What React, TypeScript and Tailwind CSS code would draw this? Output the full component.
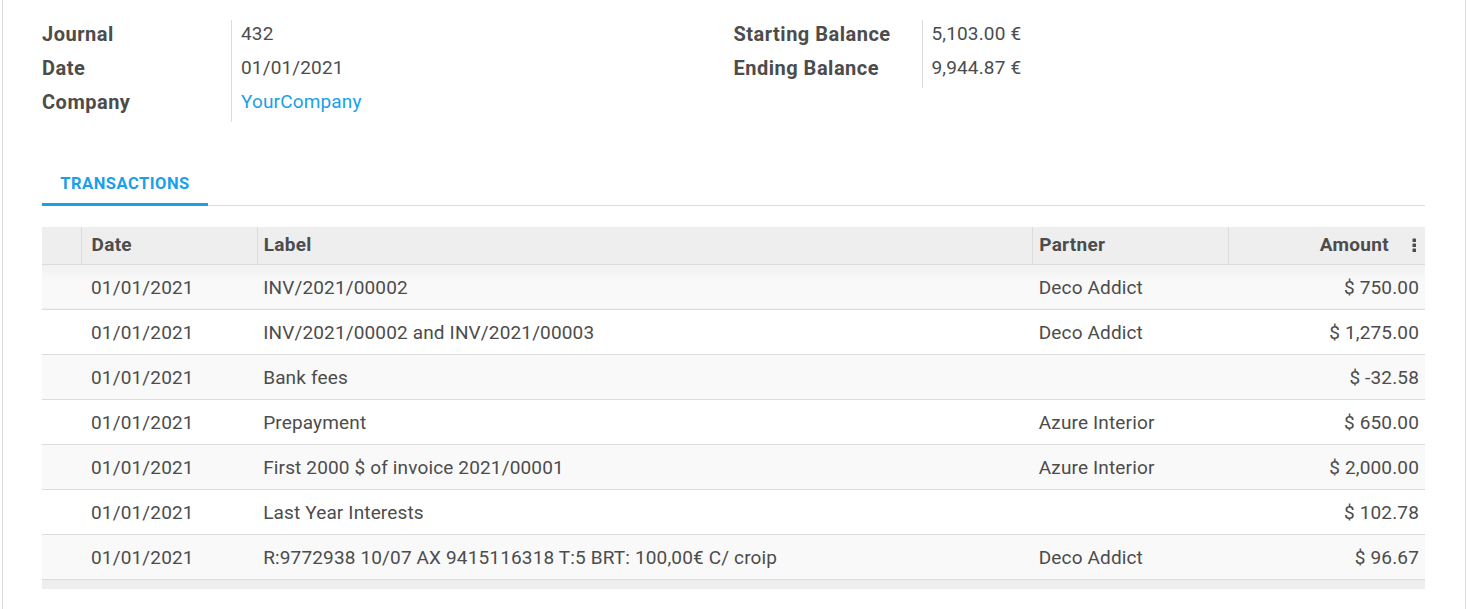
import React from 'react';

const rows = [
  { date: '01/01/2021', label: 'INV/2021/00002', partner: 'Deco Addict', amount: '$ 750.00' },
  { date: '01/01/2021', label: 'INV/2021/00002 and INV/2021/00003', partner: 'Deco Addict', amount: '$ 1,275.00' },
  { date: '01/01/2021', label: 'Bank fees', partner: '', amount: '$ -32.58' },
  { date: '01/01/2021', label: 'Prepayment', partner: 'Azure Interior', amount: '$ 650.00' },
  { date: '01/01/2021', label: 'First 2000 $ of invoice 2021/00001', partner: 'Azure Interior', amount: '$ 2,000.00' },
  { date: '01/01/2021', label: 'Last Year Interests', partner: '', amount: '$ 102.78' },
  { date: '01/01/2021', label: 'R:9772938 10/07 AX 9415116318 T:5 BRT: 100,00€ C/ croip', partner: 'Deco Addict', amount: '$ 96.67' },
];

const Field = ({ label, value, link, w }: { label: string; value: string; link?: boolean; w: string }) => (
  <div className="flex h-[34px] items-center">
    <div className={`${w} shrink-0 text-[20px] font-bold tracking-[0.5px] text-[#4c4c4c]`}>{label}</div>
    <div className={`pl-[10px] ${link ? 'text-[#1a9fe8]' : 'text-[#4c4c4c]'}`}>{value}</div>
  </div>
);

const Kebab = () => (
  <svg width="6" height="16" viewBox="0 0 6 16" className="ml-[22px] inline-block">
    <rect x="1.5" y="1.5" width="3.5" height="3.5" rx="0.6" fill="#4c4c4c" />
    <rect x="1.5" y="6.5" width="3.5" height="3.5" rx="0.6" fill="#4c4c4c" />
    <rect x="1.5" y="11.5" width="3.5" height="3.5" rx="0.6" fill="#4c4c4c" />
  </svg>
);

export default function App() {
  return (
    <div className="h-[609px] w-[1466px] bg-white text-[19px] tracking-[0.15px]" style={{ fontFamily: 'Roboto, "Noto Sans", sans-serif' }}>
      <div className="ml-[2px] h-full border-x border-[#dcdcdc] pl-[39px] pr-[40px] pt-[17px]">
        {/* header fields */}
        <div className="grid grid-cols-2">
          <div className="relative">
            <div className="absolute left-[189px] top-[3px] h-[102px] border-l border-[#dcdcdc]" />
            <Field w="w-[189px]" label="Journal" value="432" />
            <Field w="w-[189px]" label="Date" value="01/01/2021" />
            <Field w="w-[189px]" label="Company" value="YourCompany" link />
          </div>
          <div className="relative">
            <div className="absolute left-[188px] top-[3px] h-[68px] border-l border-[#dcdcdc]" />
            <Field w="w-[188px]" label="Starting Balance" value="5,103.00 €" />
            <Field w="w-[188px]" label="Ending Balance" value="9,944.87 €" />
          </div>
        </div>

        {/* tabs */}
        <div className="mt-[40px] flex border-b border-[#dcdcdc]">
          <div className="-mb-px flex h-[47px] w-[166px] items-center justify-center border-b-[3px] border-[#1a9fe8] pt-[7px] text-[16.5px] font-bold tracking-[0.5px] text-[#1a9fe8]">
            TRANSACTIONS
          </div>
        </div>

        {/* table */}
        <table className="mt-[21px] w-full table-fixed border-collapse text-[#4c4c4c]">
          <colgroup>
            <col className="w-[39px]" />
            <col className="w-[176px]" />
            <col className="w-[775px]" />
            <col className="w-[196px]" />
            <col className="w-[196px]" />
          </colgroup>
          <thead>
            <tr className="h-[37px] border-b border-[#dcdcdc] bg-[#eeeeee] tracking-[0.3px]">
              <th className="border-r border-[#dcdcdc]" />
              <th className="border-r border-[#dcdcdc] pl-[10px] text-left font-bold">Date</th>
              <th className="border-r border-[#dcdcdc] pl-[6px] text-left font-bold">Label</th>
              <th className="border-r border-[#dcdcdc] pl-[6px] text-left font-bold">Partner</th>
              <th className="pr-[8px] text-right font-bold">
                <span className="inline-flex items-center">
                  Amount
                  <Kebab />
                </span>
              </th>
            </tr>
          </thead>
          <tbody>
            {rows.map((r, i) => (
              <tr key={i} className={`h-[45px] border-b border-[#dcdcdc] ${i % 2 === 0 ? 'bg-[#f9f9f9]' : 'bg-white'} ${i === 0 ? 'bg-gradient-to-b from-[#f1f1f1] to-[#f9f9f9] to-40%' : ''}`}>
                <td />
                <td className="pl-[10px] pt-[4px]">{r.date}</td>
                <td className="pl-[6px] pt-[4px]">{r.label}</td>
                <td className="pl-[6px] pt-[4px]">{r.partner}</td>
                <td className="pr-[6px] pt-[4px] text-right">{r.amount}</td>
              </tr>
            ))}
            <tr className="h-[10px] bg-[#eeeeee]">
              <td colSpan={5} />
            </tr>
          </tbody>
        </table>
      </div>
    </div>
  );
}
